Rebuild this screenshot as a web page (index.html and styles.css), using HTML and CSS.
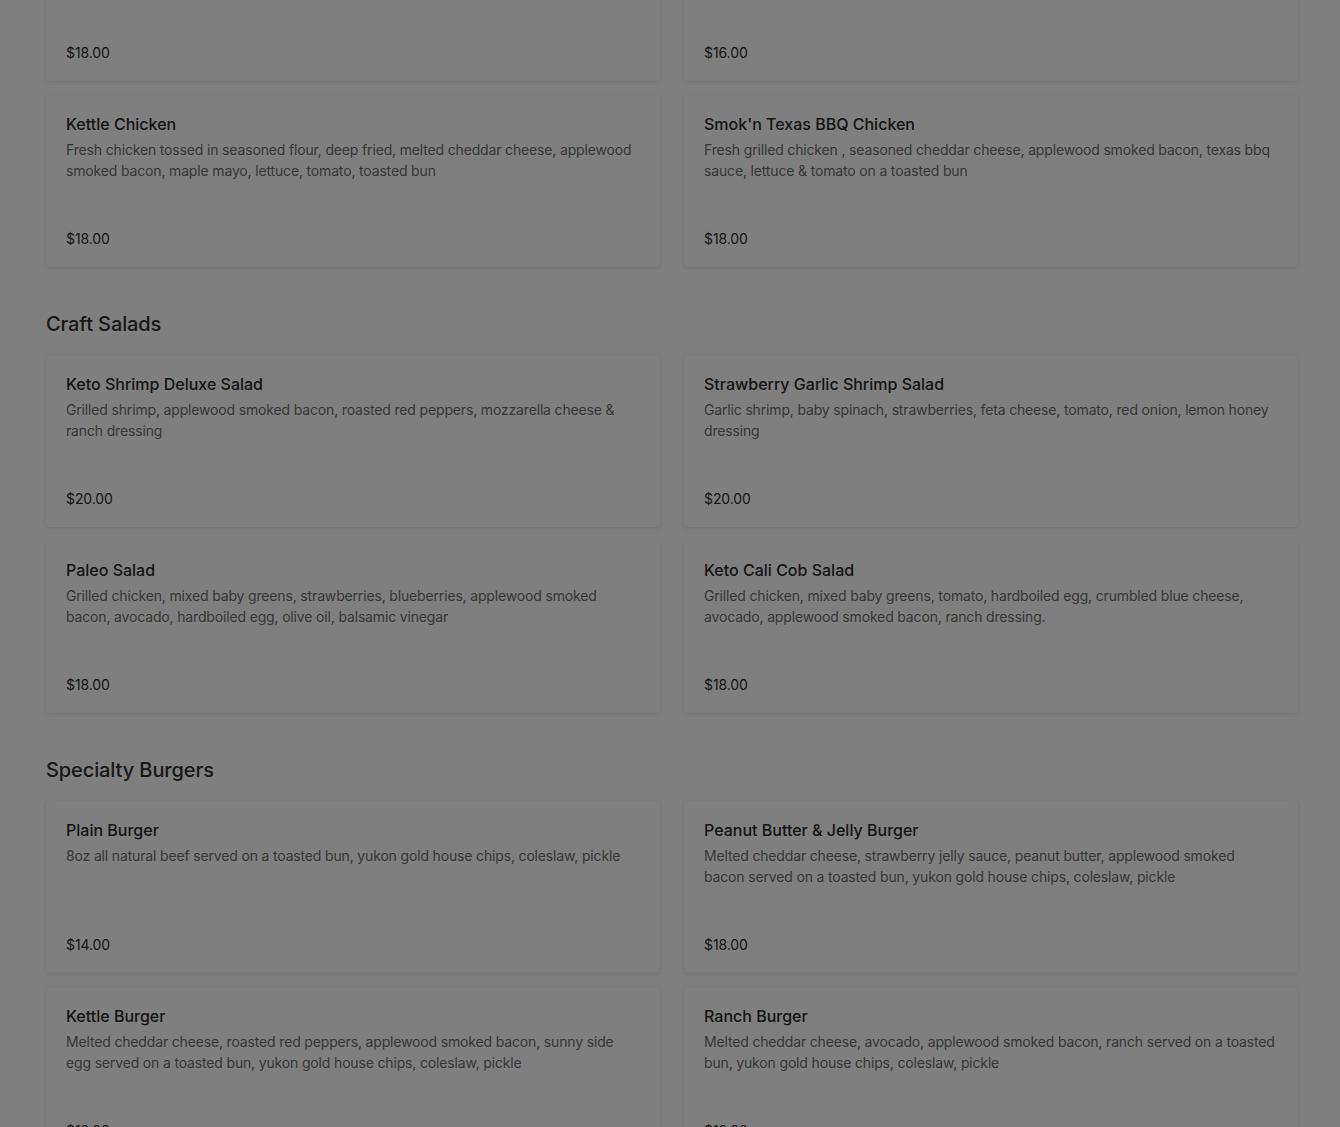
FILE: index.html
```html
<!DOCTYPE html>
<html lang="en">
<head>
<meta charset="utf-8">
<title>Menu</title>
<link rel="stylesheet" href="styles.css">
</head>
<body>
<main class="menu">
  <section class="section section-first">
    <div class="grid">
      <article class="card">
        <h3 class="item-name">Classic Chicken</h3>
        <p class="item-desc">Fresh grilled chicken, cheddar cheese, lettuce, tomato, toasted bun</p>
        <p class="item-price">$18.00</p>
      </article>
      <article class="card">
        <h3 class="item-name">Grilled Chicken</h3>
        <p class="item-desc">Fresh grilled chicken, lettuce, tomato, toasted bun</p>
        <p class="item-price">$16.00</p>
      </article>
      <article class="card">
        <h3 class="item-name">Kettle Chicken</h3>
        <p class="item-desc">Fresh chicken tossed in seasoned flour, deep fried, melted cheddar cheese, applewood smoked bacon, maple mayo, lettuce, tomato, toasted bun</p>
        <p class="item-price">$18.00</p>
      </article>
      <article class="card">
        <h3 class="item-name">Smok'n Texas BBQ Chicken</h3>
        <p class="item-desc">Fresh grilled chicken , seasoned cheddar cheese, applewood smoked bacon, texas bbq sauce, lettuce &amp; tomato on a toasted bun</p>
        <p class="item-price">$18.00</p>
      </article>
    </div>
  </section>

  <section class="section">
    <h2 class="section-title">Craft Salads</h2>
    <div class="grid">
      <article class="card">
        <h3 class="item-name">Keto Shrimp Deluxe Salad</h3>
        <p class="item-desc">Grilled shrimp, applewood smoked bacon, roasted red peppers, mozzarella cheese &amp; ranch dressing</p>
        <p class="item-price">$20.00</p>
      </article>
      <article class="card">
        <h3 class="item-name">Strawberry Garlic Shrimp Salad</h3>
        <p class="item-desc">Garlic shrimp, baby spinach, strawberries, feta cheese, tomato, red onion, lemon honey dressing</p>
        <p class="item-price">$20.00</p>
      </article>
      <article class="card">
        <h3 class="item-name">Paleo Salad</h3>
        <p class="item-desc">Grilled chicken, mixed baby greens, strawberries, blueberries, applewood smoked bacon, avocado, hardboiled egg, olive oil, balsamic vinegar</p>
        <p class="item-price">$18.00</p>
      </article>
      <article class="card">
        <h3 class="item-name">Keto Cali Cob Salad</h3>
        <p class="item-desc">Grilled chicken, mixed baby greens, tomato, hardboiled egg, crumbled blue cheese, avocado, applewood smoked bacon, ranch dressing.</p>
        <p class="item-price">$18.00</p>
      </article>
    </div>
  </section>

  <section class="section">
    <h2 class="section-title">Specialty Burgers</h2>
    <div class="grid">
      <article class="card">
        <h3 class="item-name">Plain Burger</h3>
        <p class="item-desc">8oz all natural beef served on a toasted bun, yukon gold house chips, coleslaw, pickle</p>
        <p class="item-price">$14.00</p>
      </article>
      <article class="card">
        <h3 class="item-name">Peanut Butter &amp; Jelly Burger</h3>
        <p class="item-desc">Melted cheddar cheese, strawberry jelly sauce, peanut butter, applewood smoked bacon served on a toasted bun, yukon gold house chips, coleslaw, pickle</p>
        <p class="item-price">$18.00</p>
      </article>
      <article class="card">
        <h3 class="item-name">Kettle Burger</h3>
        <p class="item-desc">Melted cheddar cheese, roasted red peppers, applewood smoked bacon, sunny side egg served on a toasted bun, yukon gold house chips, coleslaw, pickle</p>
        <p class="item-price">$18.00</p>
      </article>
      <article class="card">
        <h3 class="item-name">Ranch Burger</h3>
        <p class="item-desc">Melted cheddar cheese, avocado, applewood smoked bacon, ranch served on a toasted bun, yukon gold house chips, coleslaw, pickle</p>
        <p class="item-price">$18.00</p>
      </article>
    </div>
  </section>
</main>
<div class="overlay"></div>
</body>
</html>
```

FILE: styles.css
```css
* {
  box-sizing: border-box;
}

html, body {
  margin: 0;
  padding: 0;
  background: #ffffff;
  overflow: hidden;
}

body {
  font-family: Inter, "Noto Sans", "Liberation Sans", sans-serif;
  color: #2e2e2e;
}

.menu {
  padding: 0 42px 0 46px;
}

.section-first {
  margin-top: -91px;
}

.section {
  padding-bottom: 45px;
}

.section-title {
  margin: 0 0 19px;
  font-size: 20px;
  line-height: 24px;
  font-weight: 500;
  letter-spacing: -0.1px;
  color: #303030;
}

.grid {
  display: grid;
  grid-template-columns: 1fr 1fr;
  column-gap: 24px;
  row-gap: 14px;
}

.card {
  display: flex;
  flex-direction: column;
  height: 172px;
  padding: 20px 20px 18px;
  background: #ffffff;
  border-radius: 4px;
  box-shadow: 0 1px 4px rgba(0, 0, 0, 0.12);
}

.item-name {
  margin: 0;
  font-size: 16px;
  line-height: 18px;
  font-weight: 500;
  color: #2a2a2a;
}

.item-desc {
  margin: 6px 0 0;
  font-size: 14px;
  line-height: 21px;
  letter-spacing: -0.16px;
  color: #6e6e6e;
}

.item-price {
  margin: auto 0 0;
  font-size: 14px;
  line-height: 21px;
  letter-spacing: -0.1px;
  color: #2e2e2e;
}

.overlay {
  position: fixed;
  inset: 0;
  background: rgba(0, 0, 0, 0.5);
}
```
